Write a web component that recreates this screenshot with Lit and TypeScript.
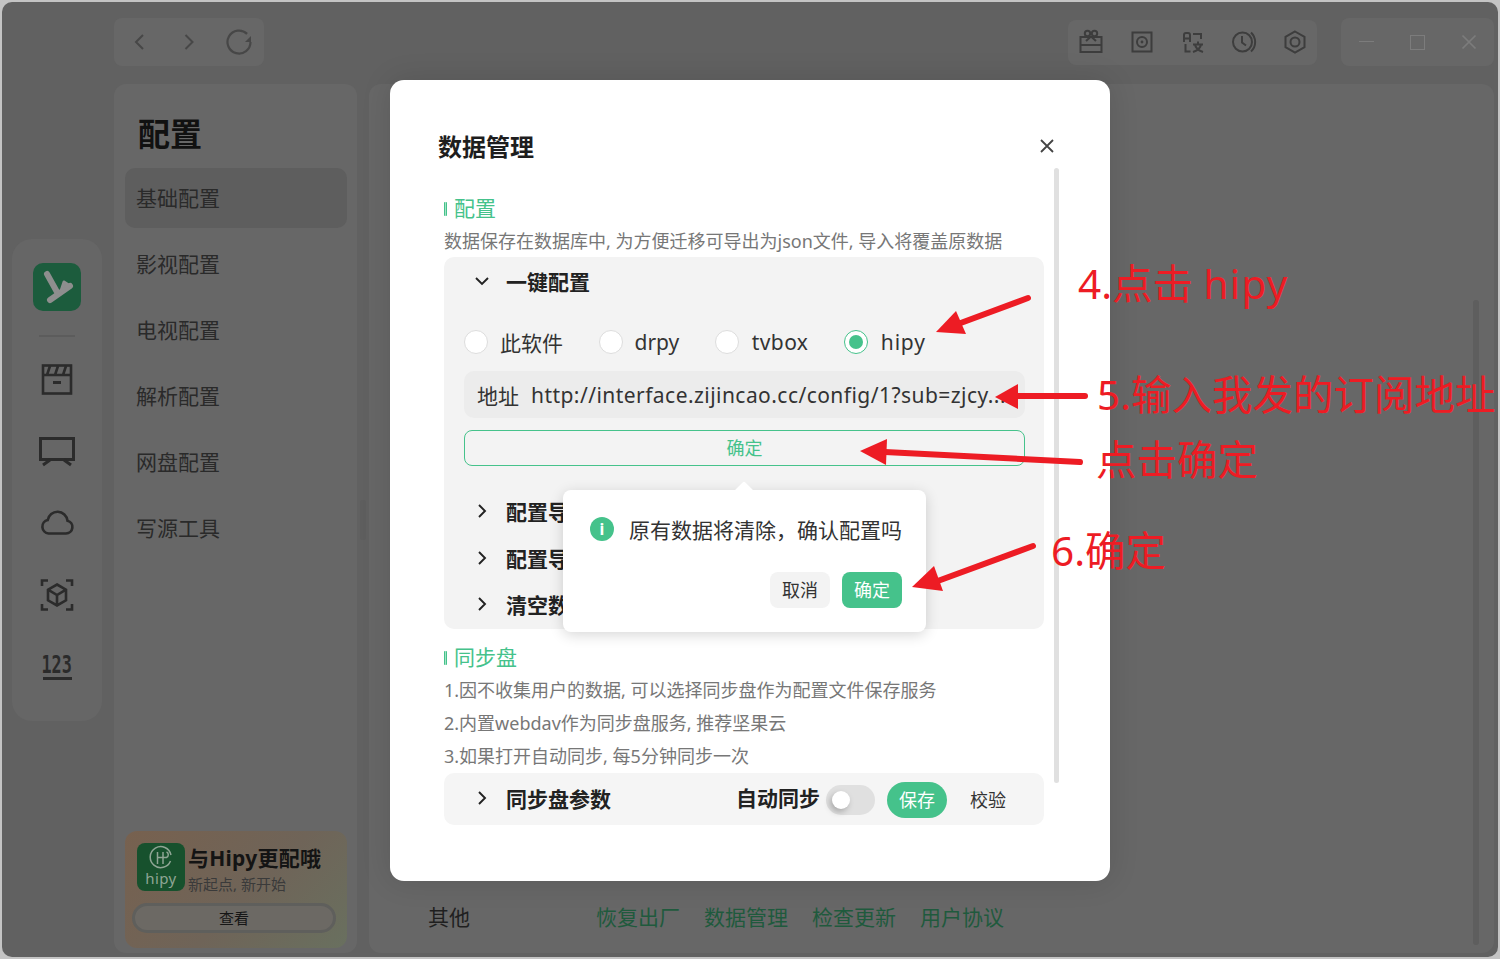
import { LitElement, html, css, svg } from "lit";
import { customElement } from "lit/decorators.js";

const menu = ["基础配置", "影视配置", "电视配置", "解析配置", "网盘配置", "写源工具"];
const links = ["恢复出厂", "数据管理", "检查更新", "用户协议"];
const sub = ["配置导入", "配置导出", "清空数据"];
const radios = [["此软件", false], ["drpy", false], ["tvbox", false], ["hipy", true]] as const;

const arrows = [
  { t: "1028,298 958,324", h: "936,332 956,311 966,334" },
  { t: "1085,396 1015,396", h: "995,397 1018,384 1018,409" },
  { t: "1080,462 885,452", h: "860,451 887,439 886,465" },
  { t: "1033,546 935,582", h: "912,587 934,566 943,591" },
];

const railIcons = [
  svg`<svg width="36" height="36" viewBox="0 0 36 36" fill="none" stroke="#2b2b2b" stroke-width="2.6"><rect x="4" y="3.5" width="28" height="28"/><path d="M4 13h28M11 4l-3 9M19 4l-3 9M27 4l-3 9" /><path d="M14 20.5h8" stroke-width="3"/></svg>`,
  svg`<svg width="38" height="36" viewBox="0 0 38 36" fill="none" stroke="#2b2b2b" stroke-width="3"><rect x="2.5" y="4.5" width="33" height="21"/><path d="M12 26l-7 5M26 26l7 5"/></svg>`,
  svg`<svg width="36" height="36" viewBox="0 1 36 36" fill="none" stroke="#2b2b2b" stroke-width="2.6"><path d="M9.5 28.5h17.500a6.500 6.500 0 0 0 1.500-12.800 10 10 0 0 0-19.800-.6 6.800 6.800 0 0 0 .8 13.400z"/></svg>`,
  svg`<svg width="36" height="36" viewBox="0 1 36 36" fill="none" stroke="#2b2b2b" stroke-width="2.600"><path d="M3 9V3.500h6M27 3.500h6V9M33 27v5.500h-6M9 32.500H3V27"/><path d="M18 7.500l9 5.200v10.600l-9 5.200-9-5.200V12.700zM9 12.700l9 5.300 9-5.300M18 18v10.500"/></svg>`,
];

const toolIcons = [
  svg`<svg width="26" height="26" viewBox="0 0 26 26" fill="none" stroke="#3d3d3d" stroke-width="2"><rect x="2.500" y="8" width="21" height="15"/><path d="M2.500 16h21M13 7.500L8 12M13 7.500L18 12"/><circle cx="9.500" cy="4.500" r="2.700"/><circle cx="16.500" cy="4.500" r="2.700"/></svg>`,
  svg`<svg width="24" height="24" viewBox="0 0 24 24" fill="none" stroke="#3d3d3d" stroke-width="2"><rect x="2.500" y="2.500" width="19" height="19"/><circle cx="12" cy="12" r="5"/><circle cx="12" cy="12" r="1.400" fill="#3d3d3d" stroke="none"/></svg>`,
  svg`<svg width="24" height="26" viewBox="0 0 24 26" fill="none" stroke="#3d3d3d" stroke-width="2"><path d="M3 13V6a2 2 0 0 1 2-2h2a2 2 0 0 1 2 2v7M3 9.500h6M12 5h8v5M4.500 15v7.500h5"/><path d="M12 15.500h10M17 12.500v3M14 15.500c.5 3.500 3.500 6 8 7.500M20 15.500c-.5 3.500-3.500 6-8 7.500"/></svg>`,
  svg`<svg width="26" height="26" viewBox="0 0 26 26" fill="none" stroke="#3d3d3d" stroke-width="2"><circle cx="11.500" cy="13" r="9.500"/><path d="M11 7v6.500l4 3M20 3.500a13 13 0 0 1 0 19"/></svg>`,
  svg`<svg width="24" height="26" viewBox="0 0 24 26" fill="none" stroke="#3d3d3d" stroke-width="2"><path d="M12 2.500l9.500 5.300v10.400L12 23.500l-9.500-5.300V7.800z"/><circle cx="12" cy="13" r="4.500"/></svg>`,
];

const chevR = svg`<svg class="chev" width="14" height="16" viewBox="0 0 14 16" fill="none" stroke="#222" stroke-width="1.900"><path d="M4 2l6 6-6 6"/></svg>`;
const chevD = svg`<svg class="chev" width="14" height="14" viewBox="0 0 14 14" fill="none" stroke="#222" stroke-width="1.900"><path d="M1 4l6 6 6-6"/></svg>`;

@customElement("app-root")
export class AppRoot extends LitElement {
  static styles = css`
    :host {
      display: block;
      position: relative;
      width: 1500px;
      height: 959px;
      overflow: hidden;
      background: #c4c4c4;
      font-family: "Noto Sans", "Noto Sans CJK SC", sans-serif;
      color: #222;
    }
    .window {
      position: absolute;
      inset: 2px;
      display: flex;
      background: #616161;
      border-radius: 10px;
      overflow: hidden;
    }
    .rail-wrap { width: 112px; padding-left: 10px; box-sizing: border-box; display: flex; align-items: center; flex: none; }
    .rail {
      width: 90px;
      height: 482px;
      box-sizing: border-box;
      padding-top: 24px;
      border-radius: 20px;
      background: #666;
      display: flex;
      flex-direction: column;
      align-items: center;
    }
    .logo { width: 48px; height: 48px; border-radius: 10px; background: #1c5c3d; flex: none; }
    .divider { width: 36px; height: 2px; background: #5c5c5c; margin: 24px 0 25px; flex: none; }
    .rail-item { width: 90px; height: 72px; flex: none; display: flex; align-items: center; justify-content: center; margin-top: -18px; margin-bottom: 18px; }
    .num { width: 29px; display: flex; flex-direction: column; align-items: center; height: 21px; border-bottom: 3px solid #2b2b2b; box-sizing: content-box; }
    .num span { font-family: "DejaVu Sans Mono", monospace; font-weight: 700; font-size: 24px; line-height: 19px; color: #2b2b2b; transform: scaleX(0.7); white-space: nowrap; }
    .main { flex: 1; display: flex; flex-direction: column; padding: 16px 4px 4px 0; min-width: 0; }
    .top { display: flex; align-items: center; height: 48px; margin-bottom: 18px; flex: none; }
    .group { background: #676767; border-radius: 8px; display: flex; align-items: center; }
    .nav { width: 150px; height: 48px; }
    .nav > div { width: 50px; display: flex; justify-content: center; align-items: center; }
    .tools { height: 45px; margin-left: auto; gap: 5px; width: 249px; }
    .tools > div { width: 46px; flex: none; display: flex; justify-content: center; align-items: center; }
    .wins { height: 48px; width: 153px; margin-left: 24px; }
    .wins > div { width: 51px; display: flex; justify-content: center; align-items: center; }
    .body { flex: 1; display: flex; gap: 12px; min-height: 0; }
    .side {
      position: relative;
      width: 243px;
      flex: none;
      background: #676767;
      border-radius: 12px;
      padding: 0 10px 0 11px;
      box-sizing: border-box;
      display: flex;
      flex-direction: column;
    }
    .side h1 { margin: 26px 0 0 13px; font-size: 32px; line-height: 48px; height: 58px; font-weight: 700; color: #111; }
    .item { height: 60px; margin-bottom: 6px; border-radius: 10px; padding-left: 11px; font-size: 21px; line-height: 61px; color: #2a2a2a; flex: none; }
    .item.on { background: #5e5e5e; }
    .promo {
      margin-top: auto;
      margin-bottom: 5px;
      height: 117px;
      border-radius: 12px;
      background: linear-gradient(135deg, #77614f 0%, #6f6458 55%, #69705f 100%);
      padding: 12px 7px 0;
      box-sizing: border-box;
      flex: none;
    }
    .promo-top { display: flex; gap: 3px; padding-left: 5px; }
    .hipy { width: 48px; height: 48px; border-radius: 8px; background: #17512d; display: flex; flex-direction: column; align-items: center; color: #8fa594; font-size: 15px; letter-spacing: .4px; line-height: 15px; flex: none; }
    .hipy svg { margin: 2px 0 0; }
    .promo-title { font-size: 21px; line-height: 30px; font-weight: 700; color: #141414; white-space: nowrap; letter-spacing: .25px; }
    .promo-sub { font-size: 15px; line-height: 20px; margin-top: 1px; color: #3a3a3a; white-space: nowrap; }
    .promo-btn { margin: 9px 4px 0 0; height: 30px; border-radius: 15px; border: 3px solid #5f5f5c; box-sizing: border-box; text-align: center; font-size: 15px; line-height: 25px; color: #161616; background: #6c6964; }
    .content {
      position: relative;
      flex: 1;
      background: #676767;
      border-radius: 12px;
      display: flex;
      align-items: flex-end;
      padding: 0 0 20px 59px;
      font-size: 21px;
      line-height: 32px;
      color: #1f1f1f;
    }
    .content .label { width: 168px; }
    .links { display: flex; gap: 24px; color: #1f5a3d; }
    .bar-a { position: absolute; width: 6px; border-radius: 3px; background: #5e5e5e; }
    .bar-a.side-b { right: -9px; top: 416px; height: 40px; }
    .bar-a.cont { right: 15px; top: 216px; height: 645px; }

    .modal {
      position: absolute;
      left: 390px;
      top: 80px;
      width: 720px;
      height: 801px;
      background: #fff;
      border-radius: 14px;
      box-shadow: 0 0 30px rgba(0,0,0,.12);
    }
    .m-head { height: 46px; margin-top: 44px; padding: 0 54px 0 48px; display: flex; align-items: center; justify-content: space-between; }
    .m-head h2 { margin: 0; padding-bottom: 4px; font-size: 24px; font-weight: 700; color: #1e1e1e; }
    .m-head svg { margin-top: -2px; margin-right: 1px; }
    .m-body { margin: 0 66px 0 54px; display: flex; flex-direction: column; }
    .sec { height: 32px; margin-top: 23px; display: flex; align-items: center; gap: 7px; font-size: 21px; color: #45c28b; }
    .sec.two { margin-top: 13px; }
    .sec span { padding-bottom: 4px; }
    .sec i { width: 3px; height: 14px; border: 1px solid #45c28b; border-width: 0 1px; background: #a5e3c7; box-sizing: border-box; border-radius: 1px; }
    .desc { font-size: 18px; line-height: 32px; height: 32px; color: #777; white-space: nowrap; }
    .desc.l { line-height: 33px; height: 33px; }
    .panel { position: relative; background: #f3f3f3; border-radius: 10px; }
    .p-one { height: 372px; }
    .row { height: 46.500px; display: flex; align-items: center; font-size: 21px; font-weight: 700; color: #222; padding-left: 31px; gap: 17px; }
    .row.first { height: 52px; padding-bottom: 4px; box-sizing: border-box; }
    .group-in { padding: 0 19px 0 20px; }
    .radios { height: 46px; margin-top: 10px; display: flex; align-items: center; gap: 35.500px; font-size: 21px; color: #333; }
    .radio { display: flex; align-items: center; gap: 12px; }
    .radio:nth-child(3) { letter-spacing: .4px; gap: 13px; }
    .radio:nth-child(4) { letter-spacing: .8px; gap: 13px; }
    .dot { width: 24px; height: 24px; border-radius: 50%; background: #fff; border: 1px solid #ddd; box-sizing: border-box; display: flex; align-items: center; justify-content: center; }
    .dot.on { border-color: #45c28b; }
    .dot.on::after { content: ""; width: 14px; height: 14px; border-radius: 50%; background: #45c28b; }
    .input { margin-top: 6px; height: 47px; border-radius: 10px; background: #ececec; display: flex; align-items: center; padding-left: 13px; gap: 12px; font-size: 21px; color: #333; white-space: nowrap; overflow: hidden; }
    .input .url { letter-spacing: .45px; }
    .confirm { margin-top: 12px; height: 36px; padding-bottom: 2px; border: 1px solid #45c28b; border-radius: 8px; box-sizing: border-box; display: flex; align-items: center; justify-content: center; font-size: 18px; color: #45c28b; margin-bottom: 22px; }
    .pop {
      position: absolute;
      left: 119px;
      top: 233px;
      width: 363px;
      height: 142px;
      background: #fff;
      border-radius: 8px;
      box-shadow: 0 3px 14px rgba(0,0,0,.16);
      box-sizing: border-box;
      padding: 27px 24px 0 27px;
    }
    .pop::before { content: ""; position: absolute; left: 174px; top: -6px; width: 14px; height: 14px; background: #fff; transform: rotate(45deg); border-radius: 2px; }
    .pop-msg { display: flex; align-items: center; gap: 15px; font-size: 21px; line-height: 24px; height: 24px; color: #333; white-space: nowrap; }
    .pop-msg b { font-weight: 400; padding-top: 1px; line-height: 24px; }
    .info { width: 24px; height: 24px; border-radius: 50%; background: #45c28b; color: #fff; font-size: 16px; font-weight: 700; text-align: center; line-height: 24px; flex: none; }
    .pop-btns { display: flex; justify-content: flex-end; gap: 12px; margin-top: 31px; }
    .btn { width: 60px; height: 36px; padding-bottom: 2px; box-sizing: border-box; border-radius: 8px; display: flex; align-items: center; justify-content: center; font-size: 18px; background: #f3f3f3; color: #333; }
    .btn.pri { background: #45c28b; color: #fff; }
    .p-two { height: 52px; display: flex; align-items: center; background: #f5f5f5; }
    .p-two .row { flex: none; width: 292px; box-sizing: border-box; padding-bottom: 2px; }
    .auto { font-size: 21px; font-weight: 700; white-space: nowrap; margin-top: -5px; color: #222; }
    .toggle { width: 49px; height: 30px; border-radius: 15px; background: #e0e0e0; margin: 2px 0 0 6px; position: relative; flex: none; }
    .toggle::after { content: ""; position: absolute; left: 6px; top: 6px; width: 18px; height: 18px; border-radius: 50%; background: #fff; box-shadow: -2px 3px 6px rgba(0,0,0,.25); }
    .save { width: 60px; height: 36px; padding-bottom: 2px; box-sizing: border-box; border-radius: 18px; background: #45c28b; color: #fff; font-size: 18px; display: flex; align-items: center; justify-content: center; margin: 2px 0 0 12px; flex: none; }
    .check { font-size: 18px; color: #333; margin-left: 23px; }
    .scroll { position: absolute; left: 664px; top: 88px; width: 5px; height: 615px; background: #e0e0e0; border-radius: 3px; }
    .overlay { position: absolute; inset: 0; pointer-events: none; }
    .note { position: absolute; color: #ed1c24; font-size: 40.500px; line-height: 50px; white-space: nowrap; }
    .note.a { left: 1078px; top: 259px; }
    .note.a span { letter-spacing: 1.200px; }
    .note.b { left: 1097px; top: 370px; }
    .note.c { left: 1096px; top: 435px; }
    .note.d { left: 1051px; top: 526px; }
  `;

  render() {
    return html`
      <div class="window">
        <div class="rail-wrap">
          <div class="rail">
            <div class="logo">
              <svg width="48" height="48" viewBox="0 0 48 48" fill="none" stroke="#8e8e8e" stroke-width="6" stroke-linecap="round" stroke-linejoin="round"><path d="M14 11l10 18"/><path d="M37 23L17 37"/><path d="M31 19l6 4-9 5z" fill="#8e8e8e" stroke-width="3"/></svg>
            </div>
            <div class="divider"></div>
            ${railIcons.map((i) => html`<div class="rail-item">${i}</div>`)}
            <div class="rail-item"><div class="num"><span>123</span></div></div>
          </div>
        </div>
        <div class="main">
          <div class="top">
            <div class="group nav">
              <div><svg width="14" height="20" viewBox="0 0 14 20" fill="none" stroke="#474747" stroke-width="2"><path d="M11 3l-7 7 7 7"/></svg></div>
              <div><svg width="14" height="20" viewBox="0 0 14 20" fill="none" stroke="#474747" stroke-width="2"><path d="M3.500 3l7 7-7 7"/></svg></div>
              <div><svg width="28" height="28" viewBox="0 0 28 28" fill="none" stroke="#474747" stroke-width="2.200"><path d="M25.500 14a11.500 11.500 0 1 1-3.400-8.100"/><path d="M26 8v6h-6z" fill="#474747" stroke="none"/></svg></div>
            </div>
            <div class="group tools">${toolIcons.map((i) => html`<div>${i}</div>`)}</div>
            <div class="group wins">
              <div><svg width="18" height="18" viewBox="0 0 18 18" stroke="#7c7c7c"><path d="M1 8.500h15"/></svg></div>
              <div><svg width="18" height="18" viewBox="0 0 18 18" fill="none" stroke="#7c7c7c"><rect x="1.500" y="2.500" width="14" height="14"/></svg></div>
              <div><svg width="18" height="18" viewBox="0 0 18 18" stroke="#7c7c7c" stroke-width="1.700"><path d="M2.500 2.500l13 13M15.500 2.500l-13 13"/></svg></div>
            </div>
          </div>
          <div class="body">
            <div class="side">
              <h1>配置</h1>
              ${menu.map((m, i) => html`<div class="item ${i === 0 ? "on" : ""}">${m}</div>`)}
              <div class="promo">
                <div class="promo-top">
                  <div class="hipy">
                    <svg width="26" height="26" viewBox="0 0 26 26" fill="none" stroke="#8fa594" stroke-width="1.500"><path d="M22.500 16A10.500 10.500 0 1 1 23 10"/><path d="M9.500 7v12M15 7v12M9.500 12.500h9a3 3 0 0 0 0-5.500"/></svg>
                    <span>hipy</span>
                  </div>
                  <div>
                    <div class="promo-title">与Hipy更配哦</div>
                    <div class="promo-sub">新起点, 新开始</div>
                  </div>
                </div>
                <div class="promo-btn">查看</div>
              </div>
              <div class="bar-a side-b"></div>
            </div>
            <div class="content">
              <div class="label">其他</div>
              <div class="links">${links.map((l) => html`<span>${l}</span>`)}</div>
              <div class="bar-a cont"></div>
            </div>
          </div>
        </div>
      </div>

      <div class="modal">
        <div class="m-head">
          <h2>数据管理</h2>
          <svg width="16" height="16" viewBox="0 0 16 16" stroke="#444" stroke-width="1.800"><path d="M2 2l12 12M14 2L2 14"/></svg>
        </div>
        <div class="m-body">
          <div class="sec"><i></i><span>配置</span></div>
          <div class="desc">数据保存在数据库中, 为方便迁移可导出为json文件, 导入将覆盖原数据</div>
          <div class="panel p-one">
            <div class="row first">${chevD}一键配置</div>
            <div class="group-in">
              <div class="radios">
                ${radios.map(([n, on]) => html`<div class="radio"><span class="dot ${on ? "on" : ""}"></span>${n}</div>`)}
              </div>
              <div class="input"><span>地址</span><span class="url">http://interface.zijincao.cc/config/1?sub=zjcy...</span></div>
              <div class="confirm">确定</div>
            </div>
            ${sub.map((s) => html`<div class="row">${chevR}${s}</div>`)}
            <div class="pop">
              <div class="pop-msg"><span class="info">i</span><b>原有数据将清除，确认配置吗</b></div>
              <div class="pop-btns"><div class="btn">取消</div><div class="btn pri">确定</div></div>
            </div>
          </div>
          <div class="sec two"><i></i><span>同步盘</span></div>
          <div class="desc l">1.因不收集用户的数据, 可以选择同步盘作为配置文件保存服务</div>
          <div class="desc l">2.内置webdav作为同步盘服务, 推荐坚果云</div>
          <div class="desc l">3.如果打开自动同步, 每5分钟同步一次</div>
          <div class="panel p-two">
            <div class="row">${chevR}同步盘参数</div>
            <div class="auto">自动同步</div>
            <div class="toggle"></div>
            <div class="save">保存</div>
            <div class="check">校验</div>
          </div>
        </div>
        <div class="scroll"></div>
      </div>

      <div class="overlay">
        <svg width="1500" height="959" viewBox="0 0 1500 959">
          ${arrows.map((a) => svg`<polyline points=${a.t} fill="none" stroke="#ed1c24" stroke-width="6" stroke-linecap="round"/><polygon points=${a.h} fill="#ed1c24"/>`)}
        </svg>
        <div class="note a">4.点击 <span>hipy</span></div>
        <div class="note b">5.输入我发的订阅地址</div>
        <div class="note c">点击确定</div>
        <div class="note d">6.确定</div>
      </div>
    `;
  }
}
